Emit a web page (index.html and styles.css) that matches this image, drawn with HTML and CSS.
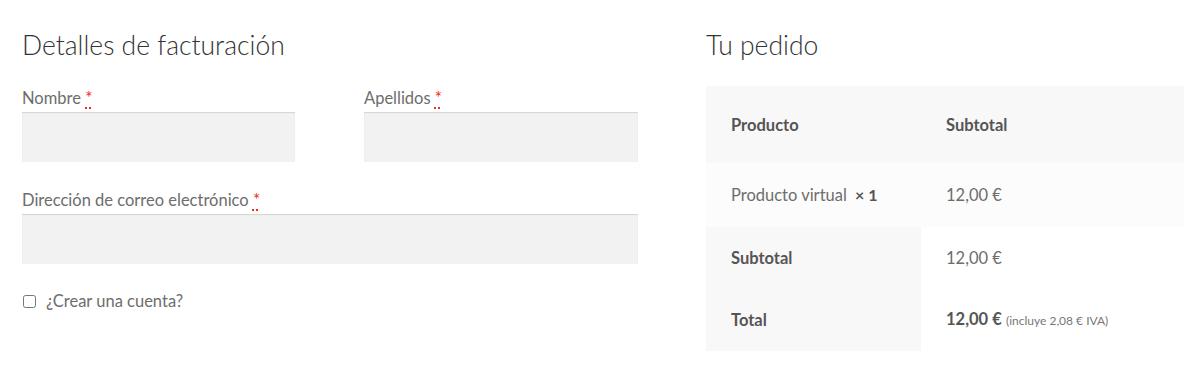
FILE: index.html
```
<!DOCTYPE html>
<html>
<head>
    <meta charset="utf-8" />
    <title>Finalizar compra</title>
    <link rel="stylesheet" href="styles.css">
</head>
<body>
    <form class="checkout" action="#" method="post">
        <div class="billing">
            <h3>Detalles de facturación</h3>
            <div class="name-row">
                <p class="field">
                    <label for="first-name">Nombre <abbr class="required" title="obligatorio">*</abbr></label>
                    <input type="text" id="first-name" />
                </p>
                <p class="field">
                    <label for="last-name">Apellidos <abbr class="required" title="obligatorio">*</abbr></label>
                    <input type="text" id="last-name" />
                </p>
            </div>
            <p class="field">
                <label for="email">Dirección de correo electrónico <abbr class="required" title="obligatorio">*</abbr></label>
                <input type="email" id="email" />
            </p>
            <p class="account">
                <input type="checkbox" id="create-account" />
                <label for="create-account">¿Crear una cuenta?</label>
            </p>
        </div>
        <div class="review">
            <h3>Tu pedido</h3>
            <table class="order-table">
                <thead>
                    <tr>
                        <th class="col-name">Producto</th>
                        <th>Subtotal</th>
                    </tr>
                </thead>
                <tbody>
                    <tr class="item">
                        <td>Producto virtual <strong class="qty">&times;&nbsp;1</strong></td>
                        <td>12,00&nbsp;&euro;</td>
                    </tr>
                </tbody>
                <tfoot>
                    <tr>
                        <th>Subtotal</th>
                        <td>12,00&nbsp;&euro;</td>
                    </tr>
                    <tr>
                        <th>Total</th>
                        <td><strong>12,00&nbsp;&euro;</strong> <small class="tax">(incluye 2,08&nbsp;&euro; IVA)</small></td>
                    </tr>
                </tfoot>
            </table>
        </div>
    </form>
</body>
</html>
```

FILE: styles.css
```
*, *:before, *:after{
    box-sizing:border-box;
}
html{
    background:#fff;
}
body{
    margin:0;
    font-family:Lato, "Liberation Sans", sans-serif;
    font-size:16.5px;
    line-height:24px;
    color:#6d6d6d;
    -webkit-font-smoothing:antialiased;
}
.checkout{
    display:flex;
    gap:68px;
    padding:28px 16px 0 22px;
}
h3{
    margin:0 0 22px 0;
    font-size:26.5px;
    line-height:34px;
    font-weight:300;
    color:#333;
}
.billing{
    width:616px;
}
.review{
    width:478px;
}
    .review h3{
        margin-bottom:24px;
    }
.name-row{
    display:grid;
    grid-template-columns:273px 274px;
    column-gap:69px;
}
.field{
    margin:0 0 24px 0;
}
    .field label{
        display:block;
        height:28px;
        padding-top:2px;
        line-height:24px;
        color:#6d6d6d;
    }
    .field input{
        display:block;
        width:100%;
        height:50px;
        border:none;
        background:#f2f2f2;
        box-shadow:inset 0 1px 1px rgba(0,0,0,0.125);
        font:inherit;
    }
abbr.required{
    color:#ee2a1c;
    text-decoration:underline dotted;
    text-decoration-thickness:2px;
    text-underline-offset:3px;
    font-weight:normal;
    font-size:17px;
    line-height:0;
}
.account{
    display:flex;
    align-items:center;
    margin:25px 0 0 0;
}
    .account input{
        margin:0 10px 0 1px;
        width:13px;
        height:13px;
    }
.order-table{
    width:100%;
    border-collapse:collapse;
    border-spacing:0;
}
    .order-table th,
    .order-table td{
        padding:0 25px;
        text-align:left;
        vertical-align:middle;
    }
    .order-table th{
        font-weight:700;
        color:#555;
    }
    .order-table .col-name{
        width:215px;
    }
    .order-table thead tr{
        height:77px;
        background:#f8f8f8;
    }
    .order-table tbody tr{
        height:64px;
        background:#fcfcfc;
    }
    .order-table tfoot tr{
        height:62px;
    }
    .order-table tfoot th{
        background:#f8f8f8;
    }
    .order-table tfoot td{
        background:#fff;
    }
.qty{
    color:#555;
    margin-left:4px;
    font-size:16px;
}
.order-table strong{
    color:#555;
}
.tax{
    font-size:12px;
    color:#777;
}
```
